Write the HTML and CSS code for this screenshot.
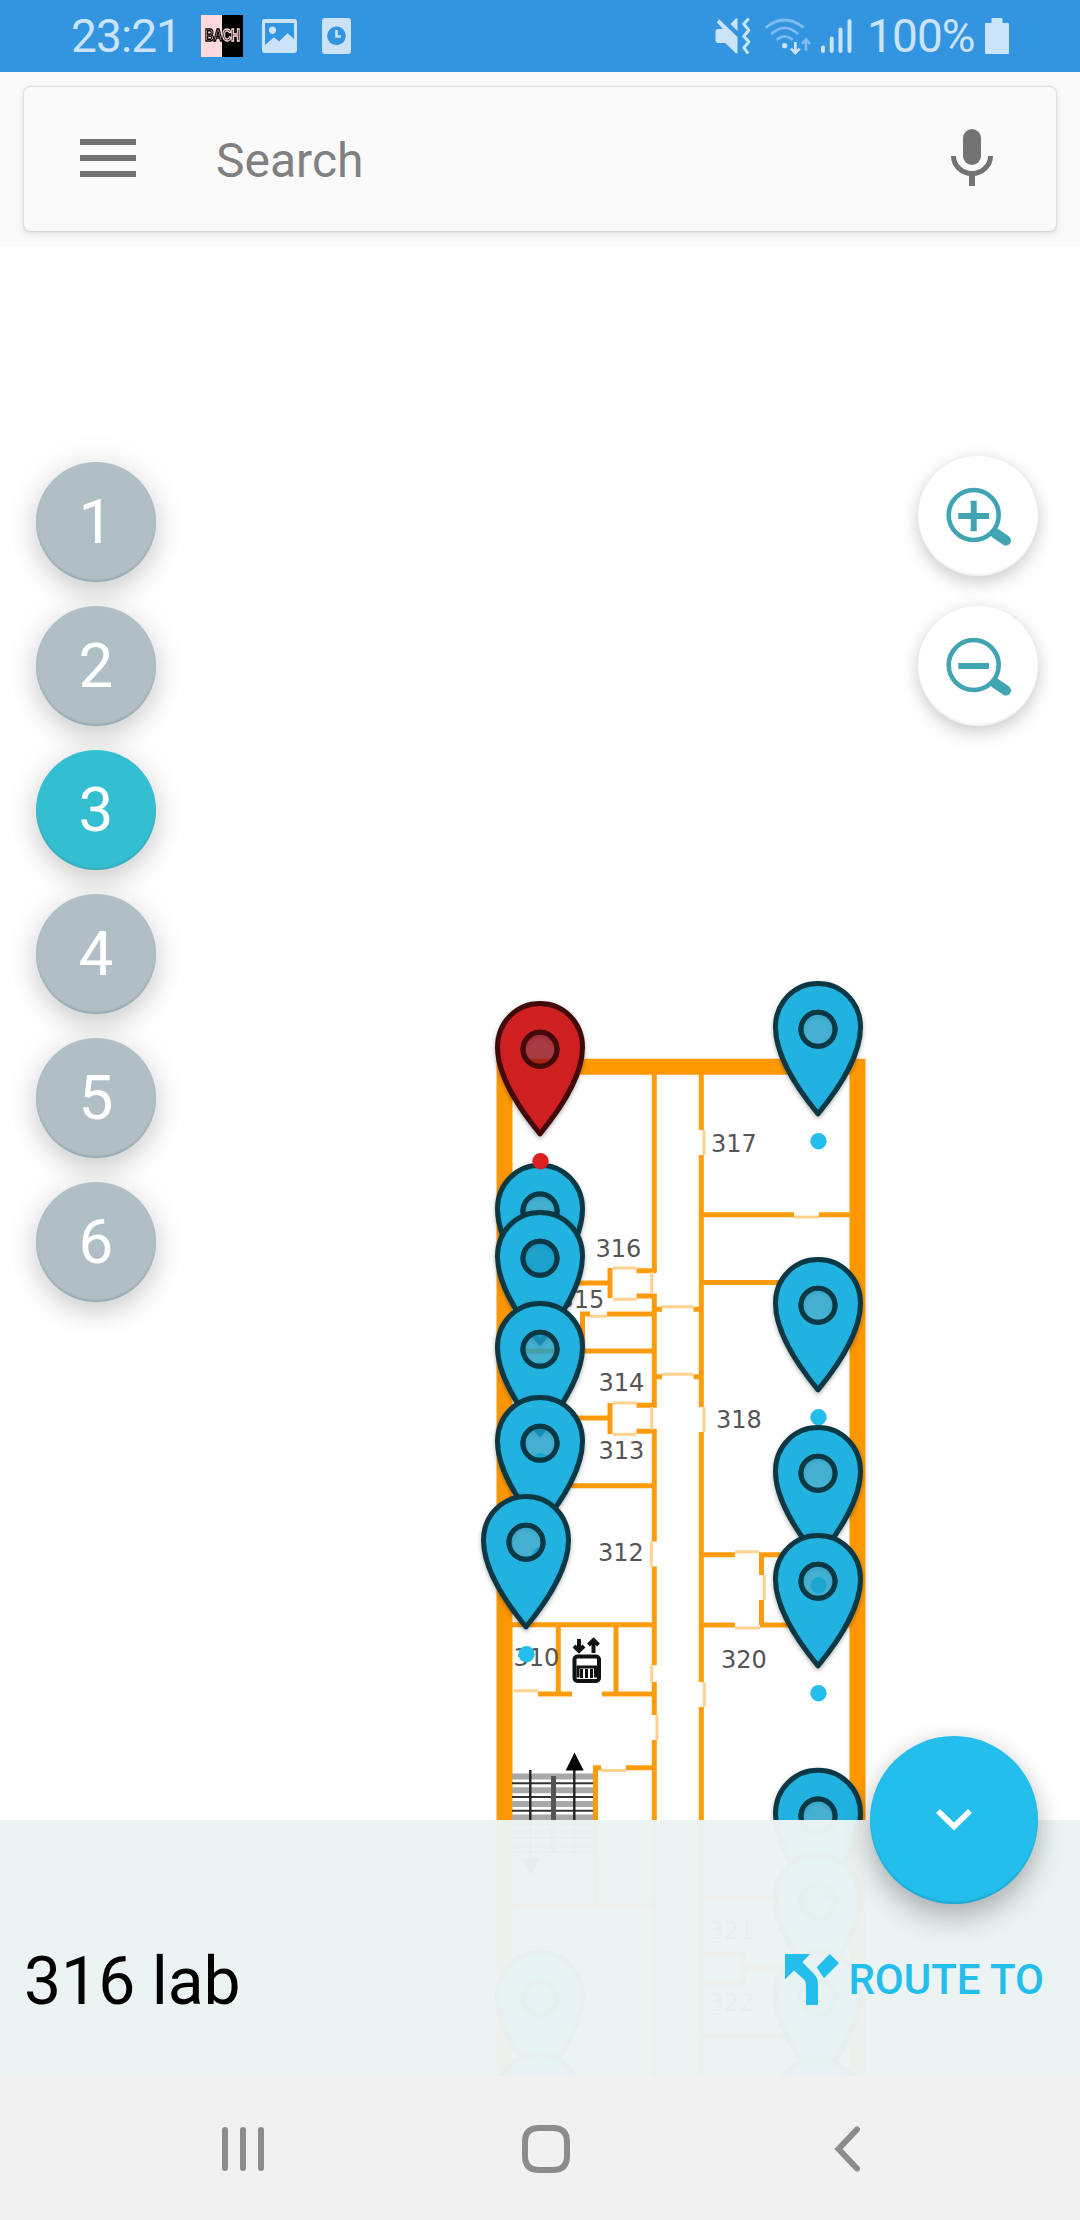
FILE: index.html
```html
<!DOCTYPE html>
<html lang="en">
<head>
<meta charset="utf-8">
<title>Indoor map</title>
<link rel="stylesheet" href="styles.css">
</head>
<body>
<div class="screen">
  <header class="status">
    <span class="clock">23:21</span>
    <span class="badge"><span><i>BA</i><b>CH</b></span></span>
    <svg class="st-image" width="35" height="34" viewBox="0 0 35 34"><path fill-rule="evenodd" d="M3 0H32a3 3 0 0 1 3 3V31a3 3 0 0 1-3 3H3a3 3 0 0 1-3-3V3a3 3 0 0 1 3-3ZM3 4V26L12 18.300L17 22.500L25.500 14.300L32 20V4ZM10.500 7.500a3.700 3.700 0 1 0 .01 0Z"/></svg>
    <svg class="st-alarm" width="29" height="36" viewBox="0 0 29 36"><path fill-rule="evenodd" d="M3 0H26a3 3 0 0 1 3 3V33a3 3 0 0 1-3 3H3a3 3 0 0 1-3-3V3a3 3 0 0 1 3-3ZM14.500 8.500a9.300 9.300 0 1 0 .01 0Z"/><path class="line" d="M14.500 12V18.500H19" stroke-width="2.600"/></svg>
    <span class="grow"></span>
    <svg class="st-mute" width="36" height="36" viewBox="508 51 105 108"><path d="M508 89L513 84H530L512 64L519 55L574 108V157H569L537 126H513L508 121ZM574 52V90L553 69L568 53Z"/><path class="line" stroke-width="9" stroke-linejoin="round" d="M608 52L593 69L608 88L593 106L608 122L593 140L606 158"/></svg>
    <svg class="st-wifi" width="48" height="37" viewBox="650 49 140 111"><g class="line dim" stroke-width="8"><path d="M653 78Q710 32 767 78M670 97Q710 60 750 97M686 114Q710 94 734 114"/><path d="M774 147V115M762 127L774 113L786 127"/></g><circle cx="710" cy="132" r="8"/><path class="line" stroke-width="8" d="M742 121V150M729 141L742 154L755 141"/></svg>
    <svg class="st-signal" width="31" height="34" viewBox="0 0 31 34"><path class="line" stroke-width="4" stroke-linecap="round" d="M2 28.500V32M10.700 19.500V32M19.500 10.500V32M28.500 2V32"/></svg>
    <span class="percent">100%</span>
    <svg class="st-battery" width="24" height="36" viewBox="0 0 24 36"><path d="M7.500 0H16.500a1 1 0 0 1 1 1V5H23a1 1 0 0 1 1 1V35a1 1 0 0 1-1 1H1a1 1 0 0 1-1-1V6a1 1 0 0 1 1-1H6.500V1a1 1 0 0 1 1-1Z"/></svg>
  </header>

  <div class="search-area">
    <div class="search-card">
      <svg width="56" height="38" viewBox="0 0 56 38"><path d="M0 0H56V6H0ZM0 16H56V22H0ZM0 32H56V38H0Z"/></svg>
      <span class="hint">Search</span>
      <svg width="42" height="57" viewBox="0 0 42 57"><rect x="12" width="18" height="36" rx="9"/><path class="mic-arc" d="M2.500 27A18.500 17.500 0 0 0 39.500 27"/><path d="M18 46H24V57H18Z"/></svg>
    </div>
  </div>

  <main class="map">
    <svg class="plan" width="1080" height="1830" viewBox="0 246 1080 1830">
      <defs>
        <g id="pin">
          <path class="body" fill-rule="evenodd" d="M0 -45.700C23.500 -45.700 42.500 -27 42.500 -2C42.500 25 22 58 0 84.500C-22 58 -42.500 25 -42.500 -2C-42.500 -27 -23.500 -45.700 0 -45.700ZM0 -17a17 17 0 1 0 .01 0Z"/>
          <circle class="eye" r="17"/>
          <circle class="dot" cx=".5" cy="112" r="8.200"/>
        </g>
      </defs>

      <g class="outer">
        <path d="M504.500 2080V1066.700H857.500V2080"/>
      </g>
      <g class="stairs">
        <path class="band" d="M512 1776.500H593M512 1790.200H593M512 1804H593M512 1817.500H593M512 1831H593M512 1845H593"/>
        <path class="step" d="M512 1783.300H593M512 1797H593M512 1810.700H593M512 1824.400H593M512 1838H593M512 1852H593"/>
        <path class="rail" d="M553.500 1776V1852"/>
        <path class="run" d="M530.300 1770V1860M574.300 1768V1856"/>
        <path class="head" d="M574.500 1752.500L583.700 1770.500H565.700ZM522 1858H540L531 1875Z"/>
      </g>
      <g class="walls">
        <path d="M654.300 1074V1272M654.300 1294V1407M654.300 1430V1541.500M654.300 1566.500V1665.300M654.300 1682V1715M654.300 1740V2080"/>
        <path d="M701.300 1074V1130M701.300 1155V1407M701.300 1432V1682M701.300 1707V2080"/>
        <path d="M703 1214.700H794M819 1214.700H850M703 1282.500H850M703 1554.700H735M759 1554.700H850M761.500 1554V1575M761.500 1600V1625M703 1625H735M760 1625H850"/>
        <path d="M636.500 1270.700H656.500M610 1268V1298M512 1283H610M636.500 1296H656.500M607 1314H654M580 1314H590M582.500 1314V1351M512 1351H654"/>
        <path d="M656 1309.300H662M693.500 1309.300H701M656 1376.700H662M693.500 1376.700H701"/>
        <path d="M636.500 1405.300H656.500M610 1403V1434M512 1418H610M636.500 1431.300H656.500M512 1485.700H654"/>
        <path d="M512 1624.700H654M558.300 1625V1694M616 1625V1694M538 1694H572M602 1694H654M593 1767.700H601M626 1767.700H654M595.500 1766V1906M512 1905.700H654"/>
        <path d="M703 1897.700H850M703 1954H743V1983H703M743 1967.700H850M703 2036.700H850"/>
      </g>
      <g class="doors">
        <path d="M704 1130V1155M794 1217H819M613 1268H636.500M651.700 1272V1294M613 1299.300H636.500M590 1316.300H607M662 1306.700H693.500M662 1374.300H693.500M613 1403H636.500M651.700 1407V1430M613 1434.300H636.500M704 1407V1432M651.300 1541.500V1566.500M735 1551.700H759M764.300 1575V1600M735 1628H760M704.300 1682V1707M651.700 1665.300V1682M657 1715V1740M514 1690.700H538M601 1770.500H626"/>
      </g>
      <g class="rooms">
        <text x="711" y="1152.300">317</text>
        <text x="595.500" y="1257.300">316</text>
        <text x="558.500" y="1307.700">315</text>
        <text x="598.500" y="1390.700">314</text>
        <text x="598.500" y="1458.700">313</text>
        <text x="598" y="1561">312</text>
        <text x="716" y="1428.300">318</text>
        <text x="513.500" y="1665.700">310</text>
        <text x="721" y="1668.300">320</text>
        <text x="708.500" y="1939">321</text>
        <text x="708.500" y="2010.700">322</text>
      </g>
      <g class="lift">
        <rect x="574.500" y="1656.500" width="24.500" height="24.500" rx="3"/>
        <path d="M579 1639V1650M574 1646L579 1651L584 1646M593.500 1653V1641M588.500 1645L593.500 1640L598.500 1645"/>
        <path class="people" d="M578 1677.500V1667H595.500V1677.500M581.500 1669V1678M586.500 1669V1678M591.500 1669V1678"/>
      </g>

      <g class="blue">
        <use href="#pin" x="818" y="1029.300"/>
        <use href="#pin" x="818" y="1305.300"/>
        <use href="#pin" x="818" y="1473.300"/>
        <use href="#pin" x="818" y="1581.300"/>
        <use href="#pin" x="818" y="1816"/>
        <use href="#pin" x="818" y="1901"/>
        <use href="#pin" x="818" y="1997.700"/>
        <use href="#pin" x="818" y="2105"/>
        <use href="#pin" x="540" y="1211"/>
        <use href="#pin" x="540" y="1258.300"/>
        <use href="#pin" x="540" y="1349.300"/>
        <use href="#pin" x="540" y="1443.300"/>
        <use href="#pin" x="526" y="1542.300"/>
        <use href="#pin" x="540" y="1998"/>
        <use href="#pin" x="538" y="2100"/>
      </g>
      <g class="red">
        <use href="#pin" x="540" y="1049.300"/>
      </g>
    </svg>

    <nav class="floors">
      <button>1</button><button>2</button><button class="on">3</button><button>4</button><button>5</button><button>6</button>
    </nav>

    <div class="zoom">
      <button><svg width="70" height="64" viewBox="0 0 70 64"><circle cx="30.700" cy="31" r="25"/><path class="sign" d="M15.300 32H46M30.700 16.700V47.200"/><path class="handle" d="M52 49L63 56.500"/></svg></button>
      <button><svg width="70" height="64" viewBox="0 0 70 64"><circle cx="30.700" cy="31" r="25"/><path class="sign" d="M15.300 32H46"/><path class="handle" d="M52 49L63 56.500"/></svg></button>
    </div>

    <section class="sheet">
      <h1>316 lab</h1>
      <a class="route"><svg width="54" height="51" viewBox="0 0 54 51"><path d="M0 0H25L17.400 8.300L29.500 20.500Q33 24 33 30V51H21V31Q21 27.500 19 25.500L9 16.500L0 25.500ZM44.700 0L54 9L39 24.300L31.700 13.300Z"/></svg><span>ROUTE TO</span></a>
    </section>
    <button class="fab"><svg width="36" height="24" viewBox="0 0 36 24"><path d="M2 3L18 18.500L34 3"/></svg></button>
  </main>

  <footer class="navbar">
    <svg width="42" height="46" viewBox="0 0 42 46"><path d="M3 4V42M21 4V42M39 4V42"/></svg>
    <svg class="home" width="48" height="48" viewBox="0 0 48 48"><path d="M17 3H31Q45 3 45 17V31Q45 45 31 45H17Q3 45 3 31V17Q3 3 17 3Z"/></svg>
    <svg width="26" height="46" viewBox="0 0 26 46"><path d="M23 3.500L4.500 23L23 42.500"/></svg>
  </footer>
</div>
</body>
</html>
```
FILE: styles.css
```css
* { box-sizing: border-box; }
body { margin: 0; font-family: Roboto, sans-serif; background: #fff; }
button { border: 0; padding: 0; font: inherit; }
svg { display: block; flex: none; }

.screen { width: 1080px; height: 2220px; display: flex; flex-direction: column; overflow: hidden; }

/* Status bar */
.status { height: 72px; flex: none; display: flex; align-items: center; padding: 0 71px; background: #3394e0; color: #cae3f8; font-size: 46px; line-height: 72px; }
.status svg { fill: #cae3f8; }
.status .line { fill: none; stroke: #cae3f8; }
.status .dim { opacity: .5; }
.clock { width: 130px; letter-spacing: -.9px; }
.badge { width: 42px; height: 42px; display: flex; align-items: center; justify-content: center; background: linear-gradient(90deg, #ffd9dc 50%, #000 50%); }
.badge span { font: 700 16px/20px "Liberation Sans", sans-serif; letter-spacing: -.4px; transform: scaleX(.78); }
.badge i, .badge b { font-style: normal; font-weight: 700; }
.badge i { color: #ffd9dc; -webkit-text-stroke: 1.500px #000; }
.badge b { color: #000; -webkit-text-stroke: 1.300px #ffd9dc; }
.st-image { margin-left: 19px; }
.st-alarm { margin-left: 25px; }
.grow { flex: 1; }
.st-mute { margin-right: 13px; }
.st-wifi { margin-right: 9px; }
.st-signal { margin-right: 15px; }
.percent { width: 118px; letter-spacing: -.9px; }

/* Search */
.search-area { height: 174px; flex: none; padding: 15px 24px; background: #fafafa; }
.search-card { height: 144px; display: flex; align-items: center; padding: 0 63px 0 56px; background: #fafafa; border-radius: 6px; box-shadow: 0 0 2px rgba(0,0,0,.28), 0 2px 7px rgba(0,0,0,.12); fill: #737373; }
.search-card svg:first-child { margin-top: -2px; }
.search-card svg:last-child { margin-top: -3px; }
.mic-arc { fill: none; stroke: #737373; stroke-width: 5; }
.hint { flex: 1; margin-left: 80px; padding-top: 3px; font-size: 48px; color: #808080; }

/* Map */
.map { position: relative; height: 1830px; flex: none; overflow: hidden; }
.outer path { fill: none; stroke: #ff9800; stroke-width: 16; }
.walls path { fill: none; stroke: #ff9b0d; stroke-width: 5; }
.doors path { fill: none; stroke: #ffd190; stroke-width: 3; }
.rooms text { font: 24px "DejaVu Sans", sans-serif; fill: #555; }
.stairs path { fill: none; }
.stairs .band { stroke: #a8a8a8; stroke-width: 6; }
.stairs .step { stroke: #333; stroke-width: 2; }
.stairs .rail { stroke: #555; stroke-width: 5; }
.stairs .run { stroke: #222; stroke-width: 2.4; }
.stairs .head { fill: #000; }
.lift rect, .lift path { fill: none; stroke: #111; stroke-width: 4; }
.lift .people { stroke-width: 3; }

.blue { --fill: #21b2df; --edge: #0a3945; --eye: rgba(28,158,200,.815); --dot: #23beeb; }
.red { --fill: #ce1f21; --edge: #42080a; --eye: rgba(148,14,24,.815); --dot: #df2023; }
.body { fill: var(--fill); stroke: var(--edge); stroke-width: 5; stroke-linejoin: round; filter: drop-shadow(0 2px 2px rgba(0,0,0,.3)); }
.eye { fill: var(--eye); stroke: var(--edge); stroke-width: 5; }
.dot { fill: var(--dot); }

.floors { position: absolute; left: 36px; top: 216px; display: flex; flex-direction: column; gap: 24px; }
.floors button { width: 120px; height: 120px; border-radius: 50%; background: #b0bec5; color: #fff; font-size: 62px; line-height: 120px; box-shadow: inset 0 -2px 2px rgba(80,100,120,.22), 0 12px 26px rgba(0,0,0,.14), 0 0 34px rgba(0,0,0,.09); }
.floors .on { background: #33bfd1; }

.zoom { position: absolute; left: 918px; top: 210px; display: flex; flex-direction: column; gap: 30px; }
.zoom button { width: 120px; height: 120px; border-radius: 50%; background: #fff; display: flex; align-items: center; justify-content: center; box-shadow: inset 0 -2px 1px rgba(0,0,0,.05), 0 8px 18px rgba(0,0,0,.15), 0 0 16px rgba(0,0,0,.08); }
.zoom svg { fill: none; stroke: #40a4b2; }
.zoom circle { stroke-width: 4.6; }
.zoom .sign { stroke-width: 6; }
.zoom .handle { stroke-width: 10; stroke-linecap: round; }

/* Bottom sheet */
.sheet { position: absolute; left: 0; right: 0; bottom: 0; height: 256px; display: flex; justify-content: space-between; padding: 0 36px 0 24px; align-items: center; background: rgba(236,243,243,.98); }
.sheet h1 { margin: 68px 0 0; font-weight: 400; font-size: 66px; line-height: 78px; color: #000; }
.route { display: flex; align-items: center; gap: 9px; margin-top: 62px; color: #23beeb; fill: #23beeb; font-size: 42px; font-weight: 500; }
.fab { position: absolute; left: 870px; top: 1490px; width: 168px; height: 168px; border-radius: 50%; background: #23beeb; display: flex; align-items: center; justify-content: center; box-shadow: inset 0 -2px 2px rgba(0,80,120,.2), 0 16px 28px rgba(0,0,0,.22), 0 0 20px rgba(0,0,0,.1); }
.fab svg { fill: none; stroke: #fff; stroke-width: 5.600; }

/* System navigation */
.navbar { height: 144px; flex: none; display: flex; align-items: center; justify-content: space-between; padding: 2px 220px 0 222px; background: #f1f1f1; }
.navbar svg { fill: none; stroke: #8c8c8c; stroke-width: 6; stroke-linecap: round; }
.navbar .home { margin-right: 7px; }
```
